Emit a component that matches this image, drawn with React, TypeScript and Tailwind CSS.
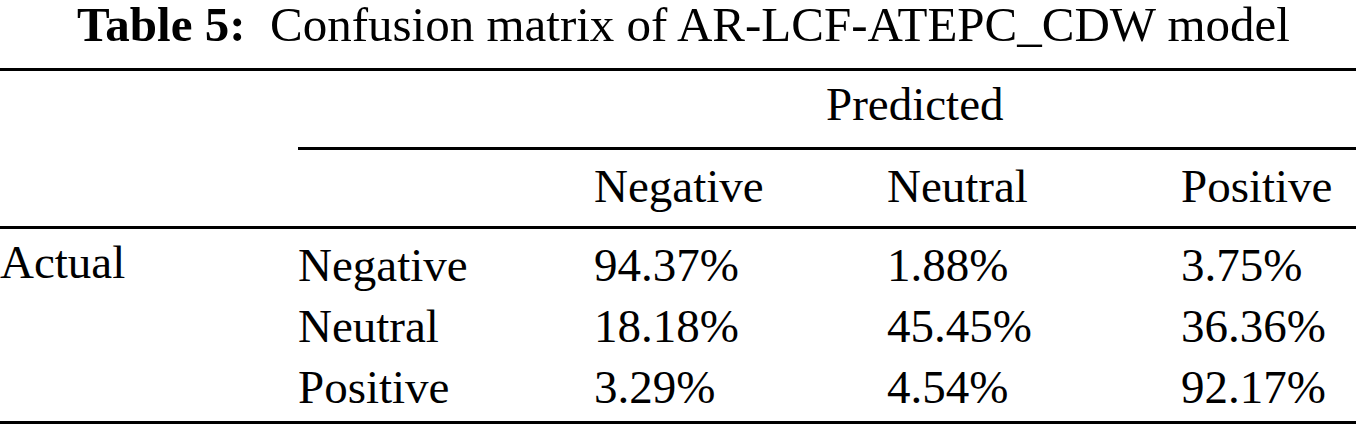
const rows = [
  { label: "Negative", values: ["94.37%", "1.88%", "3.75%"] },
  { label: "Neutral", values: ["18.18%", "45.45%", "36.36%"] },
  { label: "Positive", values: ["3.29%", "4.54%", "92.17%"] },
];

const cols = "grid grid-cols-[298px_296px_293px_294px_175px]";

export default function App() {
  return (
    <div className="w-[1367px] h-[429px] bg-white text-black font-['Liberation_Serif','Times_New_Roman',Times,serif]">
      {/* caption */}
      <div className="h-[68px] text-center text-[49px] leading-none whitespace-pre">
        <span className="font-bold">Table 5:</span>
        {"  Confusion matrix of AR-LCF-ATEPC_CDW model"}
      </div>

      <div className="w-[1356px] text-[47px] leading-none">
        <div className="h-[3px] bg-black" />

        {/* Predicted spanner */}
        <div className={`${cols} h-[76px] pt-[10px]`}>
          <div className="col-span-2" />
          <div className="col-span-3 pl-[232px]">Predicted</div>
        </div>
        <div className={cols}>
          <div />
          <div className="col-span-4 h-[3px] bg-black" />
        </div>

        {/* column headers */}
        <div className={`${cols} h-[76px] pt-[13px]`}>
          <div />
          <div />
          <div>Negative</div>
          <div>Neutral</div>
          <div>Positive</div>
        </div>
        <div className="h-[3px] bg-black" />

        {/* body */}
        <div className="h-[192px] pt-[13px]">
          {rows.map((r, i) => (
            <div key={r.label} className={`${cols} ${i === 2 ? "h-[57px]" : "h-[61px]"}`}>
              <div className="mt-[-3px]">{i === 0 ? "Actual" : ""}</div>
              <div>{r.label}</div>
              {r.values.map((v) => (
                <div key={v}>{v}</div>
              ))}
            </div>
          ))}
        </div>
        <div className="h-[3px] bg-black" />
      </div>
    </div>
  );
}
